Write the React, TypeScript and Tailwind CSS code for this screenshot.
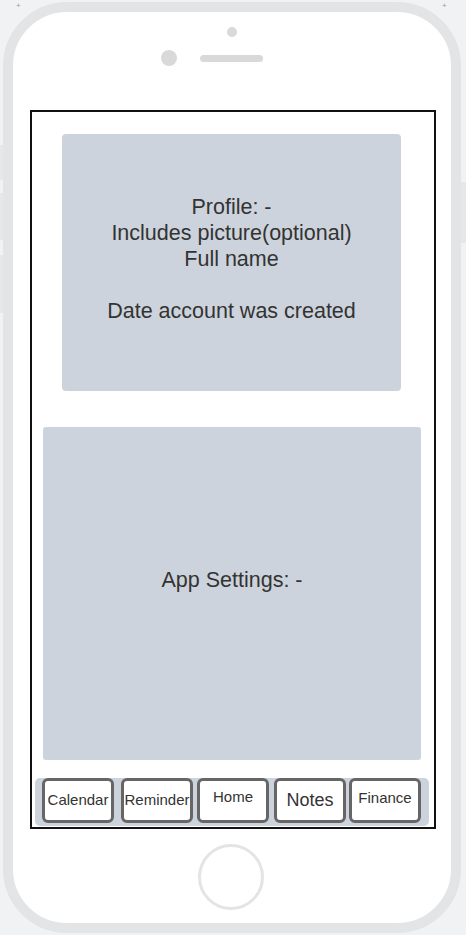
export default function App() {
  const tabs = [
    { label: "Calendar", cls: "ml-[7px] text-[15px]" },
    { label: "Reminder", cls: "ml-[7px] text-[15px]" },
    { label: "Home", cls: "ml-[4px] text-[15px] pb-[7px]" },
    { label: "Notes", cls: "ml-[5px] text-[18px]" },
    { label: "Finance", cls: "ml-[3px] text-[15px] pb-[5px]" },
  ];

  return (
    <div className="relative w-[466px] h-[935px] bg-[#f1f2f3] overflow-hidden font-['Liberation_Sans',Arial,sans-serif]">
      {/* side buttons */}
      <div className="absolute left-0 top-[145px] w-[3px] h-[35px] bg-[#e6e7e9]" />
      <div className="absolute left-0 top-[193px] w-[3px] h-[47px] bg-[#e6e7e9]" />
      <div className="absolute left-0 top-[255px] w-[3px] h-[58px] bg-[#e6e7e9]" />
      <div className="absolute right-0 top-[182px] w-[5px] h-[61px] bg-[#e6e7e9]" />
      <span className="absolute left-[16px] top-[0px] text-[8px] text-[#999]">+</span>
      <span className="absolute left-[442px] top-[0px] text-[8px] text-[#999]">+</span>

      <div className="ml-[3px] mt-[2px] w-[458px] h-[931px] rounded-[64px] border-[10px] border-[#e3e4e6] bg-white flex flex-col">
        {/* top sensors */}
        <div className="h-[98px] flex flex-col items-center">
          <div className="mt-[15px] w-[10px] h-[10px] rounded-full bg-[#d9d9d9]" />
          <div className="mt-[13px] ml-[6px] flex items-center">
            <div className="w-[16px] h-[16px] rounded-full bg-[#d9d9d9] -ml-[46px]" />
            <div className="ml-[23px] w-[63px] h-[7px] rounded-full bg-[#d9d9d9]" />
          </div>
        </div>

        {/* screen */}
        <div className="ml-[17px] w-[406px] h-[719px] border-2 border-[#111] flex flex-col">
          <div className="ml-[30px] mt-[22px] w-[339px] h-[257px] rounded-[4px] bg-[#cdd3dc] flex flex-col items-center pt-[60px] text-[21.5px] leading-[26px] text-[#333] text-center">
            <div>Profile: -</div>
            <div>Includes picture(optional)</div>
            <div>Full name</div>
            <div>&nbsp;</div>
            <div>Date account was created</div>
          </div>

          <div className="ml-[11px] mt-[36px] w-[378px] h-[333px] rounded-[3px] bg-[#cdd3dc] flex justify-center pt-[137px] text-[21.5px] text-[#333]">
            App Settings: -
          </div>

          <div className="ml-[3px] mt-[18px] w-[394px] h-[48px] rounded-[5px] bg-[#cdd3dc] flex items-start">
            {tabs.map((t) => (
              <div
                key={t.label}
                className={`w-[72px] h-[45px] shrink-0 rounded-[6px] border-[3px] border-[#666] bg-white flex items-center justify-center text-[#333] ${t.cls}`}
              >
                {t.label}
              </div>
            ))}
          </div>
        </div>

        {/* home button */}
        <div className="flex justify-center mt-[15px]">
          <div className="w-[66px] h-[66px] rounded-full border-[3px] border-[#e3e4e6] ml-[-2px]" />
        </div>
      </div>
    </div>
  );
}
